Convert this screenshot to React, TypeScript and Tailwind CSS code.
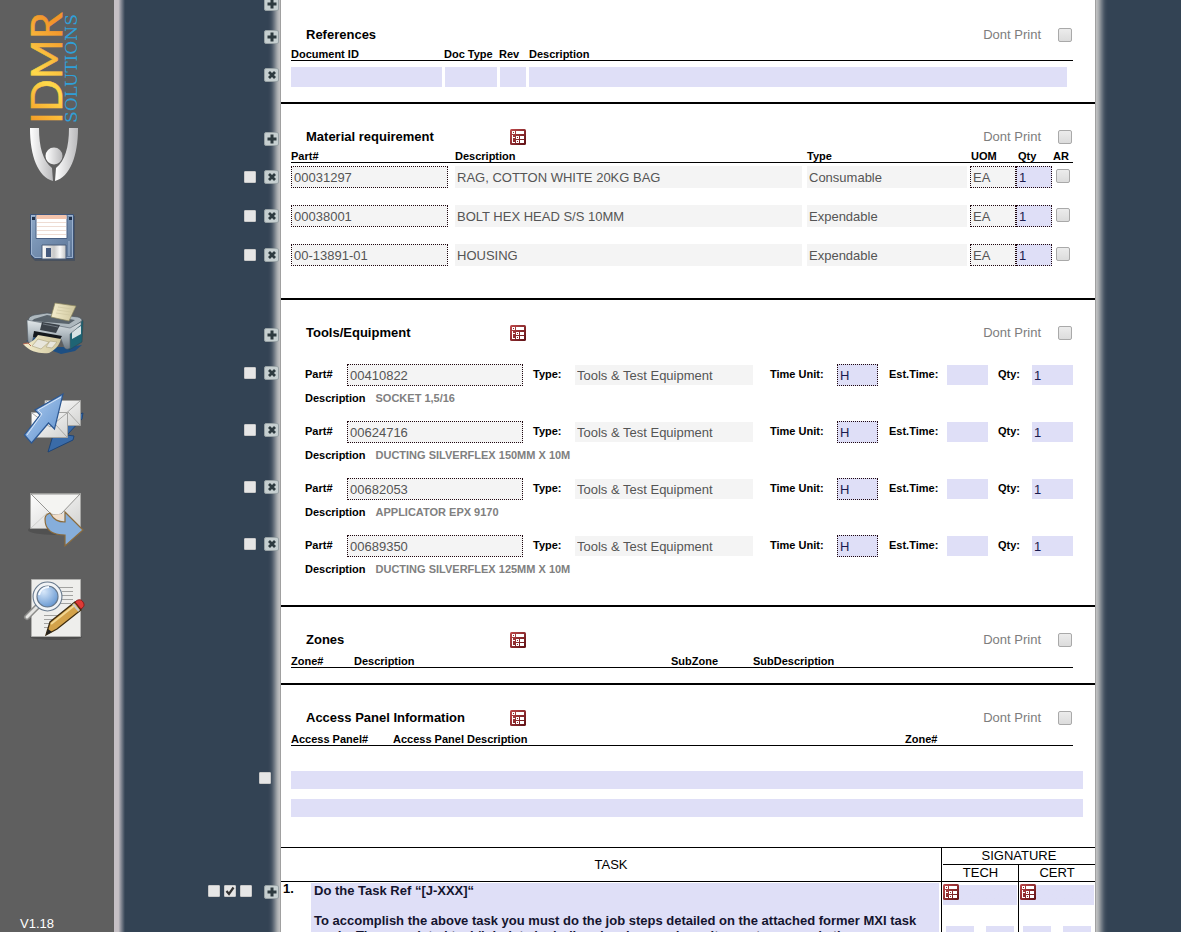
import type { ReactNode } from "react";

/* ---------- sidebar drawings ---------- */

function Logo() {
  return (
    <svg viewBox="-14 0 84 176" className="ml-[12px] h-[176px] w-[84px]" role="img" aria-label="IDMR Solutions">
      <defs>
        <linearGradient id="gold" x1="0" y1="0" x2="1" y2="0.4">
          <stop offset="0" stopColor="#f08c1e" />
          <stop offset="0.5" stopColor="#ffd94a" />
          <stop offset="1" stopColor="#f2952a" />
        </linearGradient>
        <linearGradient id="silver" x1="0" y1="0" x2="1" y2="0">
          <stop offset="0" stopColor="#ffffff" />
          <stop offset="1" stopColor="#b9b9bb" />
        </linearGradient>
      </defs>
      <text transform="translate(36 117) rotate(-90)" fontFamily="Lato, sans-serif" fontSize="43" fill="url(#gold)" stroke="url(#gold)" strokeWidth="0.5">
        IDMR
      </text>
      <text transform="translate(51 116) rotate(-90)" fontFamily="'DejaVu Serif', serif" fontSize="17" fill="#2f9fd8">
        SOLUTIONS
      </text>
      <path d="M4 121h9c0 19 4 33 13 40l1 13C12 170 4 149 4 121z" fill="url(#silver)" />
      <path d="M52 121h-9c0 19-4 33-13 40l-1 13c15-4 23-25 23-53z" fill="url(#silver)" />
      <circle cx="28" cy="149" r="8.500" fill="url(#silver)" />
    </svg>
  );
}

function SaveIcon() {
  return (
    <svg viewBox="0 0 64 64" className="size-16">
      <defs>
        <linearGradient id="disk" x1="0" y1="0" x2="1" y2="1">
          <stop offset="0" stopColor="#8ea9c9" />
          <stop offset="1" stopColor="#5b7496" />
        </linearGradient>
        <linearGradient id="shutter" x1="0" y1="0" x2="1" y2="0">
          <stop offset="0" stopColor="#ffffff" />
          <stop offset="0.5" stopColor="#c9c9c9" />
          <stop offset="0.75" stopColor="#fafafa" />
          <stop offset="1" stopColor="#c4c4c4" />
        </linearGradient>
      </defs>
      <path d="M10 11h43v45H13l-4-4z" fill="#33435c" opacity="0.5" />
      <path d="M8.500 9.500h43v44h-39l-4-4z" fill="url(#disk)" stroke="#3c5376" />
      <path d="M9.500 10.500h41v42H13l-3.500-3.500z" fill="none" stroke="#a7bdd8" strokeWidth="0.800" />
      <path d="M14 10h31v23.500H14z" fill="#fff" stroke="#4a6083" />
      <path d="M14.500 10h30v4h-30z" fill="#f3c4ad" />
      <path d="M15 17.500h29M15 21.500h29M15 25.500h29M15 29.500h29" stroke="#eedcd3" strokeWidth="1.200" />
      <path d="M10 12h3v3h-3zM47 12h3v3h-3z" fill="#20304a" />
      <path d="M20 40h24v14H20z" fill="url(#shutter)" stroke="#4b5d78" />
      <path d="M24 43h5v9h-5z" fill="#465a7d" />
      <path d="M47 36v15" stroke="#a9bdd6" />
    </svg>
  );
}

function PrinterIcon() {
  return (
    <svg viewBox="0 0 64 64" className="size-16">
      <defs>
        <linearGradient id="prn" x1="0" y1="0" x2="0" y2="1">
          <stop offset="0" stopColor="#e3e8ea" />
          <stop offset="0.45" stopColor="#b4bec4" />
          <stop offset="1" stopColor="#717c85" />
        </linearGradient>
        <linearGradient id="sheet" x1="0" y1="0" x2="1" y2="0">
          <stop offset="0" stopColor="#f4edcd" />
          <stop offset="1" stopColor="#cfc69d" />
        </linearGradient>
      </defs>
      <path d="M4 43l8-4 20 10 14 0 14-2-7 6-14 3z" fill="#1d4f83" />
      <path d="M48 29l12-7c1 0 1 1 1 3l-1 19-13 8z" fill="#1e6474" stroke="#2d4650" strokeWidth="0.600" />
      <path d="M50 33l9-5v8l-9 5z" fill="#d7e2e4" />
      <path d="M7 20c1-2 3-2 5-3l13-2 31 4c3 1 4 2 4 4l-12 8-43-6z" fill="#aeb8be" stroke="#4b555d" strokeWidth="0.700" />
      <path d="M12 21l13-4 28 5-6 4-37-3z" fill="#59636b" />
      <path d="M33 5l21 3-7 15-18-4z" fill="url(#sheet)" stroke="#8d875f" strokeWidth="0.700" />
      <path d="M36 9l14 2M35 12l14 2M34 15l14 2" stroke="#cfc7a2" strokeWidth="0.700" />
      <path d="M5 22l43 8 11-6v3l-11 9v14c-2 2-5 1-6-1l-3-8-27-5-2 9-4-1z" fill="url(#prn)" stroke="#55606a" strokeWidth="0.600" />
      <path d="M20 24l18 3-4 8-16-3z" fill="#3b4249" />
      <path d="M21 26l15 3" stroke="#6e777f" />
      <path d="M12 33l28 5-3 5-26-4z" fill="#15191d" />
      <path d="M16 37l23 4c-2 7-6 11-12 14-9 1-19-1-26-9 6 0 11-3 15-9z" fill="url(#sheet)" />
      <path d="M16 41l11 3-8 7-9-3zM28 43l7 1-5 6-6-1z" fill="#e8e6dc" stroke="#b3ab86" strokeWidth="0.700" />
      <path d="M1 46l5-1 3 3" stroke="#b86a53" fill="none" />
    </svg>
  );
}

function SendReceiveIcon() {
  return (
    <svg viewBox="0 0 64 64" className="size-16">
      <defs>
        <linearGradient id="arrowBlue" x1="0" y1="0" x2="1" y2="1">
          <stop offset="0" stopColor="#b5d0f0" />
          <stop offset="1" stopColor="#5b8fce" />
        </linearGradient>
        <linearGradient id="env" x1="0" y1="0" x2="1" y2="1">
          <stop offset="0" stopColor="#ffffff" />
          <stop offset="1" stopColor="#d2d2d0" />
        </linearGradient>
      </defs>
      <path d="M26 61l6-20 5 4 20-22 4-1-1 6-15 16 7 1-1 4z" fill="#3a6ba8" stroke="#1f4576" />
      <path d="M23 9.500h35.500v25H23z" fill="url(#env)" stroke="#a3a3a1" />
      <path d="M24 10l17 15 17-15M46 21l12 13" fill="none" stroke="#a8a8a6" />
      <path d="M9.500 21.500h36v25h-36z" fill="url(#env)" stroke="#a3a3a1" />
      <path d="M10 22l18 14 17-14M10 46l13-13M45 46L33 33" fill="none" stroke="#a8a8a6" />
      <path d="M41 3L13 19l5 5L2.500 44l7 8 17-20 6 6z" fill="url(#arrowBlue)" stroke="#2c5791" strokeWidth="1.200" />
      <path d="M39 6L16 19l4 4L5 44" fill="none" stroke="#d6e6f9" />
    </svg>
  );
}

function ForwardIcon() {
  return (
    <svg viewBox="0 0 64 64" className="size-16">
      <ellipse cx="33" cy="46" rx="27" ry="5" fill="#3c3c3c" opacity="0.400" />
      <path d="M8.500 9.500h50v35h-50z" fill="url(#env)" stroke="#a6a6a4" />
      <path d="M9 44l16-15M58 44L43 29" fill="none" stroke="#cfcfcd" />
      <path d="M9 10l20 20c3 1 7 1 10 0l19-20z" fill="#f4f4f2" stroke="#8a8a88" strokeWidth="0.900" />
      <path d="M26 31l15-1v5c-6 1-11 0-15-4z" fill="#f1dfcc" />
      <path d="M23 35c0-3 2-5 5-6 4 7 8 9 15 9V28l18 18-18 16V51c-13 0-20-5-20-16z" fill="#86aedb" stroke="#8b6b3b" strokeWidth="1.200" />
    </svg>
  );
}

function ReviewIcon() {
  return (
    <svg viewBox="0 0 64 64" className="size-16">
      <defs>
        <radialGradient id="lens" cx="0.350" cy="0.300" r="0.800">
          <stop offset="0" stopColor="#d8e8fa" />
          <stop offset="1" stopColor="#4f87c9" />
        </radialGradient>
      </defs>
      <ellipse cx="34" cy="60" rx="26" ry="3" fill="#3a3a3a" opacity="0.500" />
      <path d="M9.500 2.500h49v57h-49z" fill="#eeeeec" stroke="#b1b1af" />
      <path d="M36 10.500h15M40 14.500h11M40 18.500h11M40 22.500h11M36 26.500h13M22 38.500h20M22 42.500h16M22 46.500h12M22 50.500h8" stroke="#a2a2a0" />
      <path d="M16 29L5 40" stroke="#8c8c8a" strokeWidth="6" strokeLinecap="round" />
      <path d="M16 29L5 40" stroke="#e4e4e2" strokeWidth="3" strokeLinecap="round" />
      <circle cx="25.500" cy="19.500" r="12.500" fill="url(#lens)" stroke="#66788c" strokeWidth="5" />
      <circle cx="25.500" cy="19.500" r="12.500" fill="none" stroke="#f2f4f6" strokeWidth="2.800" />
      <path d="M17 18c1-5 5-8 10-8" stroke="#f4f9ff" strokeWidth="2" fill="none" />
      <path d="M24 58l4-13 25-20 6 8-24 19z" fill="#d3a24a" stroke="#3d2c10" strokeWidth="1.300" />
      <path d="M29 47l24-19" stroke="#f2d793" strokeWidth="2" />
      <path d="M24 58l2-6 4 3z" fill="#222" />
      <path d="M53 25c3-3 6-3 8 0s1 5-2 7z" fill="#de3a36" stroke="#8b1a1a" />
      <path d="M51 27l6 7" stroke="#c9c9c7" strokeWidth="2" />
    </svg>
  );
}

/* ---------- small controls ---------- */

function AddButton({ label }: { label: string }) {
  return (
    <button type="button" aria-label={label} className="flex h-[14px] w-[15px] shrink-0 items-center justify-center rounded-[2px] border border-[#98a2a5] bg-[#c6cfd0]">
      <svg viewBox="0 0 10 10" className="size-[10px]">
        <path d="M3.500 0.500h3v3h3v3h-3v3h-3v-3h-3v-3h3z" fill="#2d3a3f" />
      </svg>
    </button>
  );
}

function RemoveButton({ label }: { label: string }) {
  return (
    <button type="button" aria-label={label} className="flex h-[14px] w-[15px] shrink-0 items-center justify-center rounded-[2px] border border-[#98a2a5] bg-[#c6cfd0]">
      <svg viewBox="0 0 10 10" className="size-[10px]">
        <path d="M2 2l6 6M8 2l-6 6" stroke="#2d3a3f" strokeWidth="2.800" />
      </svg>
    </button>
  );
}

function GutterCheck({ label, checked }: { label: string; checked?: boolean }) {
  return (
    <span className="relative flex size-3 shrink-0">
      <input type="checkbox" aria-label={label} defaultChecked={checked} className="peer size-3 appearance-none rounded-[1px] border border-[#c9c9c9] bg-[#e6e6e6]" />
      <svg viewBox="0 0 12 12" className="pointer-events-none absolute inset-0 hidden size-3 peer-checked:block">
        <path d="M2.500 6l2.500 3 4.500-6.500" fill="none" stroke="#333" strokeWidth="2.200" />
      </svg>
    </span>
  );
}

const boxClass =
  "block size-[14px] shrink-0 appearance-none rounded-[2px] border border-[#a9a9a9] bg-linear-to-b from-[#ececec] to-[#dcdcdc]";

function ListIcon() {
  return (
    <svg viewBox="0 0 16 16" className="size-4">
      <defs>
        <linearGradient id="maroon" x1="0" y1="0" x2="1" y2="1">
          <stop offset="0" stopColor="#c04a4c" />
          <stop offset="1" stopColor="#5d1014" />
        </linearGradient>
      </defs>
      <rect width="16" height="16" rx="1.500" fill="url(#maroon)" />
      <path
        d="M2 2h3v3h-3zM6 2h8v3h-8zM2 6h1v8h-1zM3 8h2v1h-2zM3 13h2v1h-2zM6 7h3v3h-3zM6 11h3v3h-3zM10 7h4v3h-4zM10 11h4v3h-4z"
        fill="#fff"
        shapeRendering="crispEdges"
      />
      <path d="M3 3h1v1h-1zM7 8h1v1h-1zM7 12h1v1h-1z" fill="#8a2a2d" shapeRendering="crispEdges" />
    </svg>
  );
}

function ListButton({ label }: { label: string }) {
  return (
    <button type="button" aria-label={label} className="size-4 shrink-0">
      <ListIcon />
    </button>
  );
}

/* ---------- document building blocks ---------- */

const gutterClass = "flex w-[167px] shrink-0 justify-end gap-2 pr-[2px]";
const rowClass = "-ml-[167px] flex";
const labelClass = "text-[11px] font-bold leading-3";
const editClass = "block min-w-0 bg-[#dfdff7] px-[2px] text-[#1a1a4e]";
const readClass = "block min-w-0 bg-[#f4f4f4] px-[2px] text-[#555]";
const dotted = "border border-dotted border-[#200810]";

function TitleRow({ title, id, list, add }: { title: string; id: string; list?: boolean; add?: boolean }) {
  return (
    <div className={rowClass}>
      <div className={gutterClass + " items-end pb-[2px]"}>{add && <AddButton label={"Add to " + title} />}</div>
      <div className="flex h-[22px] grow items-center pl-[25px] pr-[23px]">
        <h2 className="w-[204px] font-bold">{title}</h2>
        {list && <ListButton label={"Choose " + title} />}
        <label htmlFor={id} className="ml-auto mr-[17px] text-[#7d7d7d]">
          Dont Print
        </label>
        <input id={id} type="checkbox" className={boxClass} />
      </div>
    </div>
  );
}

function Section({ children, className }: { children: ReactNode; className: string }) {
  return <section className={"border-b-2 border-black " + className}>{children}</section>;
}

const materials = [
  { part: "00031297", description: "RAG, COTTON WHITE 20KG BAG", type: "Consumable" },
  { part: "00038001", description: "BOLT HEX HEAD S/S 10MM", type: "Expendable" },
  { part: "00-13891-01", description: "HOUSING", type: "Expendable" },
];

const tools = [
  { part: "00410822", description: "SOCKET 1,5/16" },
  { part: "00624716", description: "DUCTING SILVERFLEX 150MM X 10M" },
  { part: "00682053", description: "APPLICATOR EPX 9170" },
  { part: "00689350", description: "DUCTING SILVERFLEX 125MM X 10M" },
];

const taskText =
  "Do the Task Ref “[J-XXX]“\n\nTo accomplish the above task you must do the job steps detailed on the attached former MXI task\ncards. The completed task/job data including drawings and results must supersede the";

function References() {
  return (
    <Section className="pb-[15px] pt-[13px]">
      <TitleRow title="References" id="print-references" add />
      <table className="block">
        <thead className="block">
          <tr className="ml-[10px] mr-[22px] flex h-[15px] items-end gap-[3px] border-b border-black text-left">
            <th className={labelClass + " w-[150px]"}>Document ID</th>
            <th className={labelClass + " w-[52px] whitespace-nowrap"}>Doc Type</th>
            <th className={labelClass + " w-[27px]"}>Rev</th>
            <th className={labelClass}>Description</th>
          </tr>
        </thead>
        <tbody className="block pt-[6px]">
          <tr className={rowClass + " gap-[3px] pr-[28px]"}>
            <td className={gutterClass + " mr-[7px] items-start pt-[1px]"}>
              <RemoveButton label="Remove reference" />
            </td>
            <td className="w-[151px]">
              <input aria-label="Document ID" className={editClass + " h-5 w-full"} />
            </td>
            <td className="w-[52px]">
              <input aria-label="Doc Type" className={editClass + " h-5 w-full"} />
            </td>
            <td className="w-[26px]">
              <input aria-label="Rev" className={editClass + " h-5 w-full"} />
            </td>
            <td className="grow">
              <input aria-label="Reference description" className={editClass + " h-5 w-full"} />
            </td>
          </tr>
        </tbody>
      </table>
    </Section>
  );
}

function Materials() {
  return (
    <Section className="pb-8 pt-[22px]">
      <TitleRow title="Material requirement" id="print-materials" list add />
      <table className="block">
        <thead className="block">
          <tr className="ml-[10px] mr-[22px] flex h-[15px] items-end border-b border-black text-left">
            <th className={labelClass + " w-[164px]"}>Part#</th>
            <th className={labelClass + " grow"}>Description</th>
            <th className={labelClass + " w-[164px]"}>Type</th>
            <th className={labelClass + " w-[47px]"}>UOM</th>
            <th className={labelClass + " w-[35px]"}>Qty</th>
            <th className={labelClass + " w-[20px]"}>AR</th>
          </tr>
        </thead>
        <tbody className="flex flex-col gap-[17px] pt-[3px]">
          {materials.map((m) => (
            <tr key={m.part} className={rowClass + " pr-[25px]"}>
              <td className={gutterClass + " mr-[10px] items-center"}>
                <GutterCheck label={"Select " + m.part} />
                <RemoveButton label={"Remove " + m.part} />
              </td>
              <td className="mr-[7px] w-[157px]">
                <input aria-label="Part#" readOnly defaultValue={m.part} className={readClass + " h-[22px] w-full " + dotted} />
              </td>
              <td className="mr-[5px] grow">
                <input aria-label="Description" readOnly defaultValue={m.description} className={readClass + " h-[22px] w-full"} />
              </td>
              <td className="mr-[3px] w-[160px]">
                <input aria-label="Type" readOnly defaultValue={m.type} className={readClass + " h-[22px] w-full"} />
              </td>
              <td className="w-[46px]">
                <input aria-label="UOM" readOnly defaultValue="EA" className={readClass + " h-[22px] w-full " + dotted} />
              </td>
              <td className="mr-[4px] w-[36px]">
                <input aria-label="Qty" defaultValue="1" className={editClass + " h-[22px] w-full " + dotted} />
              </td>
              <td className="pt-[3px]">
                <input type="checkbox" aria-label={"As required " + m.part} className={boxClass} />
              </td>
            </tr>
          ))}
        </tbody>
      </table>
    </Section>
  );
}

function Tools() {
  return (
    <Section className="pb-7 pt-[22px]">
      <TitleRow title="Tools/Equipment" id="print-tools" list add />
      <ul className="flex flex-col gap-[15px] pt-5">
        {tools.map((t) => (
          <li key={t.part} className={rowClass}>
            <div className={gutterClass + " h-[18px] items-center"}>
              <GutterCheck label={"Select " + t.part} />
              <RemoveButton label={"Remove " + t.part} />
            </div>
            <div className="grow">
              <div className="flex h-[22px] items-center pl-6 pr-[22px]">
                <label htmlFor={"part" + t.part} className={labelClass + " w-[42px] shrink-0 pb-[2px]"}>
                  Part#
                </label>
                <input id={"part" + t.part} readOnly defaultValue={t.part} className={readClass + " h-[22px] w-[176px] " + dotted} />
                <label htmlFor={"type" + t.part} className={labelClass + " ml-[10px] w-[42px] shrink-0 pb-[2px]"}>
                  Type:
                </label>
                <input id={"type" + t.part} readOnly defaultValue="Tools & Test Equipment" className={readClass + " h-5 w-0 grow"} />
                <label htmlFor={"unit" + t.part} className={labelClass + " ml-[17px] w-[67px] shrink-0 pb-[2px]"}>
                  Time Unit:
                </label>
                <input id={"unit" + t.part} defaultValue="H" className={editClass + " h-[22px] w-[41px] shrink-0 " + dotted} />
                <label htmlFor={"est" + t.part} className={labelClass + " ml-[11px] w-[58px] shrink-0 pb-[2px]"}>
                  Est.Time:
                </label>
                <input id={"est" + t.part} className={editClass + " h-5 w-[41px] shrink-0"} />
                <label htmlFor={"qty" + t.part} className={labelClass + " ml-[10px] w-[34px] shrink-0 pb-[2px]"}>
                  Qty:
                </label>
                <input id={"qty" + t.part} defaultValue="1" className={editClass + " h-5 w-[41px] shrink-0"} />
              </div>
              <p className={labelClass + " flex gap-[10px] pb-[2px] pl-6 pt-[6px]"}>
                <span>Description</span>
                <span className="text-[#808080]">{t.description}</span>
              </p>
            </div>
          </li>
        ))}
      </ul>
    </Section>
  );
}

function Zones() {
  return (
    <Section className="pb-[15px] pt-[22px]">
      <TitleRow title="Zones" id="print-zones" list />
      <table className="block">
        <thead className="block">
          <tr className="ml-[10px] mr-[22px] flex h-[17px] items-end border-b border-black text-left">
            <th className={labelClass + " w-[63px]"}>Zone#</th>
            <th className={labelClass + " grow"}>Description</th>
            <th className={labelClass + " w-[82px]"}>SubZone</th>
            <th className={labelClass + " w-[320px]"}>SubDescription</th>
          </tr>
        </thead>
      </table>
    </Section>
  );
}

function AccessPanels() {
  return (
    <section className="pb-[30px] pt-[22px]">
      <TitleRow title="Access Panel Information" id="print-panels" list />
      <div className="ml-[10px] mr-[22px] flex h-[17px] items-end border-b border-black">
        <span className={labelClass + " w-[102px]"}>Access Panel#</span>
        <span className={labelClass + " grow"}>Access Panel Description</span>
        <span className={labelClass + " w-[168px]"}>Zone#</span>
      </div>
      <div className={rowClass + " pt-[25px]"}>
        <div className="flex w-[167px] shrink-0 justify-end pr-[10px] pt-[1px]">
          <GutterCheck label="Select access panel" />
        </div>
        <div className="flex grow flex-col gap-[10px] pl-[10px] pr-3">
          <input aria-label="Access panel" className={editClass + " h-[18px] w-full"} />
          <input aria-label="Access panel notes" className={editClass + " h-[18px] w-full"} />
        </div>
      </div>
    </section>
  );
}

function SignatureCell({ name }: { name: string }) {
  return (
    <td className="w-[77px] border-l border-black px-[1px] pt-[2px]">
      <div className="flex h-[21px] items-start bg-linear-to-b from-white from-5% to-[#dfdff7] to-5%">
        <ListButton label={name + " sign"} />
        <input aria-label={name + " signature"} className="block h-5 w-0 grow bg-transparent" />
      </div>
      <div className="flex justify-between px-[3px] pt-[21px]">
        <input aria-label={name + " day"} className={editClass + " h-[18px] w-7"} />
        <input aria-label={name + " month"} className={editClass + " h-[18px] w-7"} />
      </div>
    </td>
  );
}

function TaskTable() {
  return (
    <table className="block border-t border-black">
      <thead className="block">
        <tr className="flex h-[34px] border-b border-black">
          <th className="flex grow items-center justify-center font-normal">TASK</th>
          <th className="w-[154px] border-l border-black pl-[1px] font-normal">
            <div className="h-[17px] border-b border-black leading-4">SIGNATURE</div>
            <div className="flex leading-4">
              <span className="w-[75px]">TECH</span>
              <span className="grow border-l border-black">CERT</span>
            </div>
          </th>
        </tr>
      </thead>
      <tbody className="block">
        <tr className={rowClass}>
          <td className="flex w-[167px] shrink-0 items-start justify-end gap-1 pr-[2px] pt-[3px]">
            <GutterCheck label="Hold task 1" />
            <GutterCheck label="Print task 1" checked />
            <GutterCheck label="Select task 1" />
            <span className="w-1" />
            <AddButton label="Add task" />
          </td>
          <td className="w-[30px] shrink-0 pl-[2px] font-bold leading-[14px]">1.</td>
          <td className="grow pr-[2px] pt-[1px]">
            <textarea
              aria-label="Task text"
              defaultValue={taskText}
              className="block h-[92px] w-full resize-none overflow-hidden bg-[#dfdff7] px-[3px] font-bold leading-[15px] text-[#14142e]"
            />
          </td>
          <SignatureCell name="Tech" />
          <SignatureCell name="Cert" />
        </tr>
      </tbody>
    </table>
  );
}

export default function App() {
  return (
    <div className="flex h-screen overflow-hidden bg-[#334354] font-['Liberation_Sans',Arial,sans-serif] text-[13px] leading-4 text-black">
      <aside className="flex w-[114px] shrink-0 flex-col bg-[#5f5f5f] pt-[7px]">
        <Logo />
        <nav className="ml-[22px] flex flex-col gap-[29px] pt-[22px]">
          <button type="button" aria-label="Save" className="size-16">
            <SaveIcon />
          </button>
          <button type="button" aria-label="Print" className="size-16">
            <PrinterIcon />
          </button>
          <button type="button" aria-label="Send and receive" className="size-16">
            <SendReceiveIcon />
          </button>
          <button type="button" aria-label="Forward" className="size-16">
            <ForwardIcon />
          </button>
          <button type="button" aria-label="Review" className="size-16">
            <ReviewIcon />
          </button>
        </nav>
        <p className="mt-auto pl-5 text-white">V1.18</p>
      </aside>
      <div className="w-[11px] shrink-0 bg-linear-to-r from-[#c5c0c5] from-40% to-[#334354]" />
      <main className="min-w-0 grow pl-[156px] pr-[86px]">
        <div className="-mt-[3px] bg-white shadow-[0_0_0_1px_#a0a0a0,0_0_6px_6px_#c9c9c9]">
          <div className={rowClass}>
            <div className={gutterClass}>
              <AddButton label="Add item" />
            </div>
          </div>
          <References />
          <Materials />
          <Tools />
          <Zones />
          <AccessPanels />
          <TaskTable />
        </div>
      </main>
    </div>
  );
}
